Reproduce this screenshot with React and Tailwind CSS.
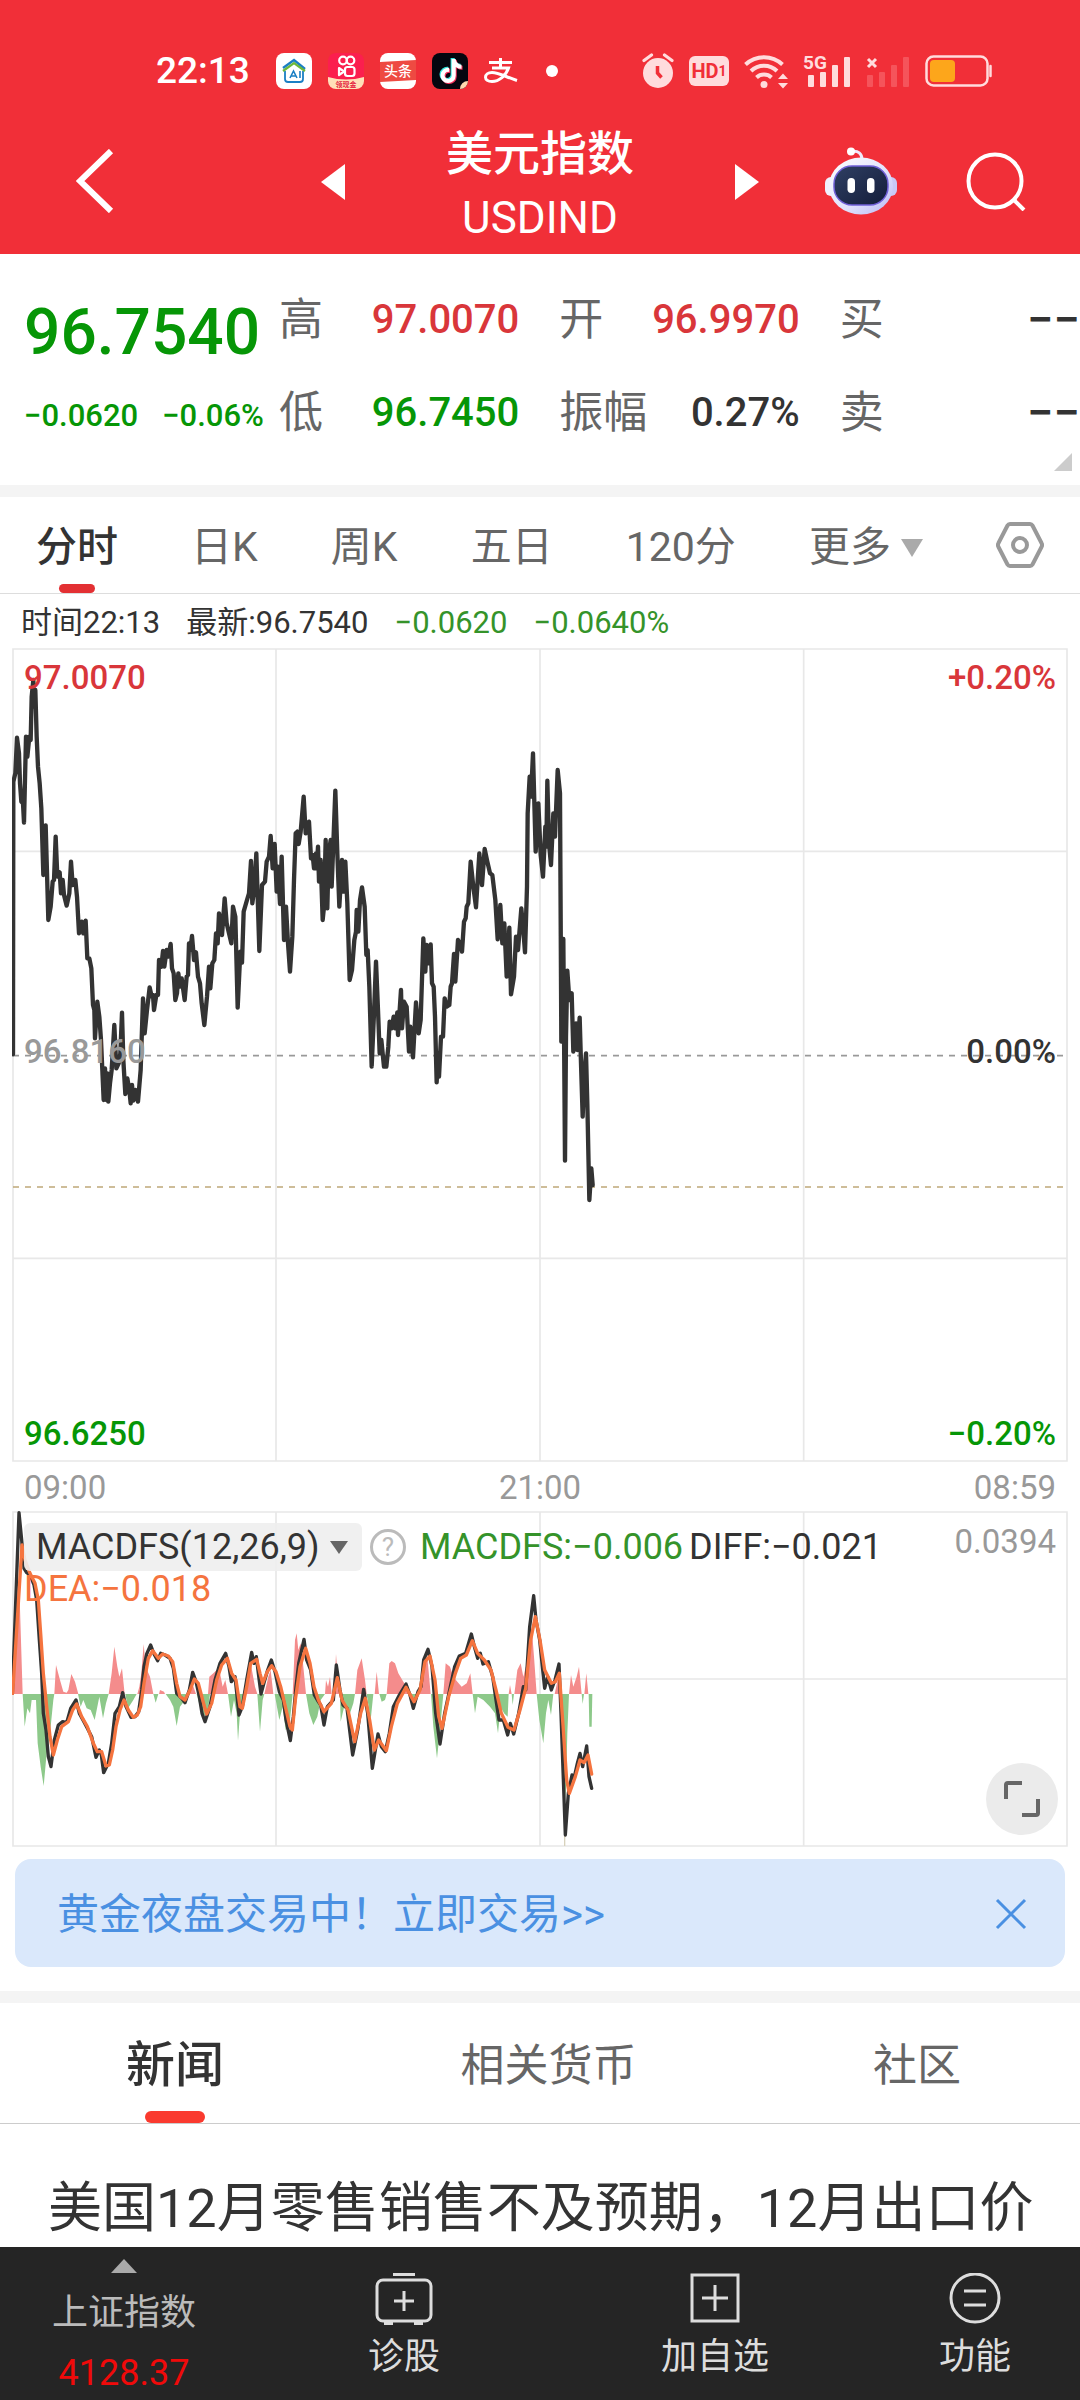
import { useState } from 'react';
import { FaTiktok } from 'react-icons/fa6';

const quotes = [
  { label: '高', value: '97.0070', color: 'text-[40px] text-[#d9363a]' },
  { label: '开', value: '96.9970', color: 'text-[40px] text-[#d9363a]' },
  { label: '买', value: '−−', color: 'text-[47px] text-[#333333]' },
  { label: '低', value: '96.7450', color: 'text-[40px] text-[#069606]' },
  { label: '振幅', value: '0.27%', color: 'text-[40px] text-[#333333]' },
  { label: '卖', value: '−−', color: 'text-[47px] text-[#333333]' },
];

const periods = ['分时', '日K', '周K', '五日', '120分'];
const sections = ['新闻', '相关货币', '社区'];

// Chart points are in thirds of a pixel, one "x,y" pair per tick
const PRICE =
  '39,1243 40,425 46,400 51,293 57,340 60,430 64,485 69,490 72,548 78,290 82,350 88,290 92,300 95,170 100,120 102,200 106,150 110,290 114,380 119,430 124,505 130,705 137,556 145,840 152,800 158,725 162,720 167,590 172,710 179,697 183,760 188,720 192,765 200,797 208,760 213,665 218,735 226,720 231,770 237,880 245,845 250,880 257,842 262,955 268,955 274,985 279,1095 283,1110 285,1195 292,1085 298,1130 303,1200 311,1380 315,1285 319,1380 322,1300 325,1385 330,1330 335,1290 343,1155 349,1285 356,1270 361,1240 366,1118 370,1260 376,1362 382,1315 388,1350 392,1390 396,1335 400,1382 406,1350 414,1385 422,1290 429,1075 434,1180 441,1110 449,1042 455,1070 459,1065 462,1110 469,1065 474,1065 477,960 484,980 489,933 493,980 500,930 505,950 512,912 516,985 521,1000 526,1080 531,1060 535,1000 540,1040 545,1015 554,1080 560,1010 564,1005 567,910 571,930 576,888 582,960 588,937 594,1010 600,1030 605,1090 613,1155 621,1070 627,980 631,1045 637,970 643,960 648,880 653,910 657,820 666,885 674,775 680,850 687,880 694,910 699,800 706,830 713,1103 721,935 726,968 731,815 741,780 747,760 753,663 757,790 763,745 769,640 778,933 786,735 795,725 800,665 807,650 812,588 818,685 824,612 830,755 834,680 840,792 845,650 852,900 858,800 864,910 870,995 877,890 882,720 887,580 892,575 896,612 902,575 911,470 917,580 927,545 933,655 938,645 942,685 948,640 950,685 954,620 957,725 962,660 968,840 972,800 977,600 982,805 986,640 992,600 995,740 1000,610 1006,452 1012,640 1018,800 1026,660 1030,755 1036,665 1042,790 1049,1020 1056,990 1063,900 1068,875 1070,810 1075,875 1080,780 1086,742 1094,800 1099,945 1103,930 1108,1040 1115,1280 1122,1120 1128,965 1134,1110 1139,1240 1144,1200 1152,1280 1159,1280 1165,1220 1169,1145 1175,1165 1181,1130 1186,1165 1192,1117 1194,1185 1203,1050 1206,1165 1212,1085 1220,1100 1227,1235 1231,1160 1239,1252 1248,1087 1256,1180 1262,1140 1270,895 1276,995 1280,915 1287,970 1292,913 1296,1030 1301,1040 1305,1130 1310,1327 1314,1240 1317,1310 1323,1190 1329,1190 1334,1075 1340,1100 1348,1095 1352,1040 1356,1030 1362,942 1366,1025 1374,900 1380,910 1386,935 1392,845 1397,835 1400,800 1405,790 1412,665 1420,740 1428,802 1438,640 1446,735 1454,627 1462,665 1470,700 1477,705 1486,780 1493,898 1501,795 1507,910 1513,850 1520,1010 1528,863 1533,1063 1542,1010 1548,890 1554,930 1564,805 1570,870 1575,937 1581,740 1583,520 1589,410 1593,470 1599,340 1607,635 1615,490 1622,645 1629,710 1636,560 1639,620 1642,422 1647,610 1653,675 1660,520 1665,590 1673,390 1680,460 1684,1205 1690,897 1695,1562 1698,1190 1702,992 1708,1080 1715,1060 1720,1235 1728,1150 1732,1230 1739,1133 1743,1270 1748,1430 1753,1300 1758,1240 1762,1390 1768,1680 1774,1585 1778,1635';

const DIFF =
  '37,580 57,38 65,120 72,205 80,218 90,225 102,255 110,300 118,420 125,520 130,640 138,690 145,770 153,800 163,720 175,675 188,665 200,668 212,625 228,600 238,640 250,662 262,685 275,710 288,772 298,750 304,765 311,818 325,790 335,730 345,640 358,620 368,578 378,620 393,652 405,650 416,635 425,570 432,500 440,462 452,435 462,462 473,482 482,460 495,465 510,475 520,505 530,580 545,595 555,608 568,570 578,517 588,545 598,590 606,640 615,665 630,620 645,540 660,490 677,460 687,500 694,545 705,530 717,645 727,620 740,540 755,457 762,490 769,470 775,520 783,582 793,545 803,510 814,480 825,515 838,575 850,600 858,660 871,722 880,650 888,560 896,490 912,418 920,480 932,510 943,585 955,605 962,615 972,675 982,620 1000,600 1009,495 1020,570 1029,615 1041,625 1058,765 1073,690 1091,568 1103,640 1117,805 1134,702 1144,740 1156,755 1168,700 1180,620 1198,585 1218,552 1230,585 1240,625 1254,575 1263,560 1271,480 1284,448 1296,500 1307,640 1320,732 1334,640 1350,565 1364,500 1378,468 1397,460 1414,402 1423,440 1433,475 1441,460 1449,492 1465,485 1478,530 1488,600 1497,660 1510,660 1523,705 1531,670 1541,702 1556,640 1570,560 1577,570 1589,380 1601,287 1608,360 1619,420 1627,500 1634,565 1643,530 1654,570 1665,540 1677,492 1683,640 1696,1005 1705,880 1716,825 1722,835 1732,790 1740,760 1748,800 1760,738 1767,830 1775,865';

const DEA =
  '38,580 66,135 75,180 90,220 105,250 115,300 122,400 130,520 140,620 150,710 160,765 172,720 185,680 205,665 218,630 230,612 245,650 262,680 280,730 292,755 305,755 318,798 328,795 338,750 348,680 360,630 372,600 385,630 400,652 412,645 422,620 432,550 445,475 458,452 475,475 488,462 505,468 518,485 530,550 540,590 555,600 570,570 583,537 595,550 608,600 620,642 635,610 650,540 665,495 682,475 695,520 708,540 720,620 727,625 740,560 752,490 770,478 780,520 788,550 802,515 815,497 828,515 842,560 856,620 870,680 877,690 886,600 900,500 917,445 930,490 942,560 955,600 972,635 994,610 1012,533 1026,600 1044,630 1064,725 1082,640 1096,595 1109,660 1123,750 1136,720 1159,752 1174,680 1192,610 1218,562 1242,605 1260,570 1275,485 1290,468 1305,540 1316,650 1326,685 1346,590 1366,520 1382,475 1399,465 1417,422 1433,460 1453,480 1473,510 1488,570 1504,640 1524,682 1542,690 1560,630 1577,565 1592,420 1606,350 1620,420 1634,510 1654,550 1666,545 1678,520 1690,690 1700,840 1708,880 1726,830 1740,780 1752,788 1764,765 1775,822';

const UP_BARS =
  '37,582 45,400 57,230 68,582 163,582 168,495 180,540 190,575 200,578 205,570 214,522 225,545 235,582 326,582 335,520 343,440 352,500 358,530 366,505 374,582 412,582 418,560 424,520 431,432 437,500 450,530 460,582 477,582 480,570 492,575 495,582 560,582 575,545 588,582 624,582 628,530 640,520 650,510 660,520 668,560 676,540 684,582 732,582 740,540 752,490 765,560 772,582 793,582 805,530 812,510 820,582 878,582 885,420 890,400 895,450 902,430 908,480 918,582 975,582 978,540 984,560 990,530 995,582 1002,582 1008,462 1014,540 1020,582 1065,582 1072,510 1085,475 1095,540 1100,582 1124,582 1130,515 1137,582 1160,582 1168,490 1175,483 1185,490 1195,520 1210,545 1225,570 1235,582 1255,582 1270,480 1282,470 1292,582 1330,582 1337,490 1350,500 1360,530 1372,545 1385,560 1400,550 1411,520 1418,582 1526,582 1530,555 1535,582 1543,582 1552,510 1562,490 1570,530 1585,470 1595,380 1602,470 1610,582 1664,582 1675,530 1682,582 1707,582 1713,525 1720,560 1730,530 1737,500 1745,582 1753,582 1759,520 1765,582';

const DOWN_BARS =
  '68,582 74,680 82,625 90,640 95,600 108,600 113,730 122,800 131,858 140,760 150,700 160,600 163,582 234,582 242,620 250,600 260,625 272,630 284,660 292,620 298,590 309,655 318,610 326,582 376,582 384,625 400,600 410,582 460,582 467,608 475,582 497,582 510,600 520,620 530,678 540,620 555,600 562,582 590,582 600,620 612,650 625,620 630,582 684,582 693,650 702,600 710,640 714,722 720,640 730,582 772,582 780,695 788,600 793,582 824,582 838,660 848,620 857,690 868,680 878,582 918,582 928,640 940,675 952,650 962,600 975,582 1020,582 1022,665 1035,610 1050,640 1060,610 1065,582 1100,582 1112,660 1120,582 1138,582 1145,605 1155,600 1160,582 1235,582 1243,625 1252,582 1293,582 1300,680 1311,775 1320,690 1330,582 1418,582 1425,640 1433,590 1450,600 1470,620 1485,640 1494,700 1502,620 1512,640 1523,650 1526,582 1535,582 1538,615 1542,582 1610,582 1618,660 1630,730 1638,640 1645,600 1653,645 1660,582 1684,582 1690,800 1697,900 1702,700 1707,582 1745,582 1748,612 1752,582 1766,582 1768,680 1775,680 1777,582';

const HomeAppIcon = () => (
  <svg viewBox="0 0 36 36" className="h-9 w-9">
    <rect width="36" height="36" rx="8" fill="#fff" />
    <path d="M9 18v8a3 3 0 0 0 3 3h12a3 3 0 0 0 3-3v-8" fill="none" stroke="#1b7fc4" strokeWidth="1.8" />
    <path d="M7 15 18 7l11 9" fill="none" stroke="#1b7fc4" strokeWidth="2.4" />
    <path d="m7 18 11-8 11 8" fill="none" stroke="#6cb83a" strokeWidth="2.2" />
    <path d="m14 25 3.5-7 3.5 7m-5.500-2h4M24 18v7" fill="none" stroke="#1b7fc4" strokeWidth="1.6" />
  </svg>
);

const CameraAppIcon = () => (
  <svg viewBox="0 0 36 36" className="h-9 w-9">
    <defs>
      <clipPath id="cameraClip"><rect width="36" height="36" rx="8" /></clipPath>
    </defs>
    <g clipPath="url(#cameraClip)">
      <rect width="36" height="36" fill="#fb1f4e" />
      <path d="M0 24q18 5 36 0v12H0z" fill="#ffe0b8" />
      <g fill="none" stroke="#fff" strokeWidth="2.2">
        <circle cx="15" cy="7.500" r="3.800" />
        <circle cx="22.500" cy="7.500" r="3.800" />
        <rect x="17" y="14" width="9.500" height="9" rx="2.500" />
        <path d="m11 15 5 3.500-5 3.500z" strokeLinejoin="round" />
      </g>
      <text x="18" y="34" textAnchor="middle" fontSize="7" fontWeight="700" fill="#e5243f">领现金</text>
    </g>
  </svg>
);

const HeadlineAppIcon = () => (
  <svg viewBox="0 0 36 36" className="h-9 w-9">
    <rect width="36" height="36" rx="8" fill="#fff" />
    <path d="M0 9 36 7v20L0 29z" fill="#ee4a42" />
    <text x="18" y="23" textAnchor="middle" fontSize="14" fontWeight="500" fill="#fff">头条</text>
  </svg>
);

const MusicAppIcon = () => (
  <svg viewBox="0 0 36 36" className="h-9 w-9">
    <rect width="36" height="36" rx="8" fill="#05060f" />
    <FaTiktok x="6" y="5" size={24} color="#35e4dc" />
    <FaTiktok x="8" y="7" size={24} color="#f5325c" />
    <FaTiktok x="7" y="6" size={24} color="#ffffff" />
    <path d="M28 36a8 8 0 0 1 8-8 8 8 0 0 1-8 8z" fill="#ffd9b0" />
  </svg>
);

const PayIcon = () => (
  <svg viewBox="0 0 34 26" className="h-[26px] w-[34px]" fill="none" stroke="#fff" strokeWidth="3">
    <path d="M5 4.500h23M16.500 0v10M8 10h16.500c-2.500 7.500-9.500 13.500-16.500 13.500-4 0-6.500-1.800-6.500-4.300S4 14.500 8 14.500c6.500 0 14 4.500 25 8" />
  </svg>
);

const AlarmIcon = () => (
  <svg viewBox="0 0 32 36" className="h-9 w-8">
    <circle cx="16" cy="20" r="15" fill="#ffdcdd" />
    <path d="M2 7.500 9.500 2M30 7.500 22.500 2" stroke="#ffdcdd" strokeWidth="3.200" strokeLinecap="round" />
    <path d="M15.500 13v7l4 4.500" fill="none" stroke="#f12f38" strokeWidth="3.500" />
  </svg>
);

const WifiIcon = () => (
  <svg viewBox="0 0 44 36" className="h-9 w-11">
    <g fill="none" stroke="#ffdcdd" strokeWidth="4">
      <path d="M1.500 11.500a27 27 0 0 1 37 0" />
      <path d="M7 18a18.500 18.500 0 0 1 26 0" />
      <path d="M12.500 24.500a11 11 0 0 1 15 0" />
    </g>
    <circle cx="20" cy="31.500" r="3.500" fill="#ffdcdd" />
    <path d="M34 26 39 20.500l5 5.500zM34 30h10l-5 5.500z" fill="#ffdcdd" />
  </svg>
);

const MobileSignalIcon = () => (
  <svg viewBox="0 0 48 36" className="h-9 w-12 overflow-visible" fill="#ffdcdd">
    <rect x="5" y="22" width="6" height="12" rx="1" />
    <rect x="17" y="19" width="6" height="15" rx="1" />
    <rect x="29" y="12" width="6" height="22" rx="1" />
    <rect x="41" y="4" width="6" height="30" rx="1" />
    <text x="0" y="16" fontSize="19" fontWeight="700">5G</text>
  </svg>
);

const NoSignalIcon = () => (
  <svg viewBox="0 0 44 36" className="h-9 w-11">
    <path d="m2 6 8 8m0-8-8 8" stroke="#ffdcdd" strokeWidth="3" />
    <g fill="#f5545b">
      <rect x="1" y="22" width="6" height="12" rx="1" />
      <rect x="13" y="19" width="6" height="15" rx="1" />
      <rect x="25" y="12" width="6" height="22" rx="1" />
      <rect x="37" y="4" width="6" height="30" rx="1" />
    </g>
  </svg>
);

const BatteryIcon = () => (
  <svg viewBox="0 0 68 34" className="h-[34px] w-[68px]">
    <rect x="1.500" y="2.500" width="61" height="29" rx="7" fill="none" stroke="#ffdcdd" strokeWidth="2.500" />
    <rect x="5" y="6" width="25" height="22" rx="4" fill="#fda61b" />
    <path d="M65.500 12v10" stroke="#ffdcdd" strokeWidth="2.500" strokeLinecap="round" />
  </svg>
);

const RobotIcon = () => (
  <svg viewBox="0 0 72 68" className="h-[68px] w-[72px]">
    <defs>
      <linearGradient id="shell" x1="0" y1="0" x2="1" y2="1">
        <stop offset="0" stopColor="#ffffff" />
        <stop offset="0.600" stopColor="#dfe0fb" />
        <stop offset="1" stopColor="#b9b8f4" />
      </linearGradient>
      <linearGradient id="visor" x1="0" y1="0" x2="1" y2="1">
        <stop offset="0" stopColor="#2f3f63" />
        <stop offset="1" stopColor="#141d3a" />
      </linearGradient>
    </defs>
    <path d="M27 4.500c6-1 10 2 10 8" fill="none" stroke="#efe9fb" strokeWidth="3" />
    <circle cx="26" cy="4.500" r="4" fill="#fff" />
    <rect x="0" y="30" width="14" height="19" rx="6" fill="#f0f0fd" />
    <rect x="58" y="30" width="14" height="19" rx="6" fill="#c9c9f6" />
    <ellipse cx="36" cy="39" rx="32" ry="28.500" fill="url(#shell)" />
    <rect x="9" y="19" width="54" height="39" rx="18" fill="url(#visor)" stroke="#6f5fd6" strokeWidth="1.500" />
    <rect x="22.500" y="31" width="7.500" height="15" rx="3.700" fill="#fff" />
    <rect x="42" y="31" width="7.500" height="15" rx="3.700" fill="#fff" />
  </svg>
);

const StatusBar = () => (
  <div className="flex h-[42px] items-center justify-between pl-[156px] pr-[87px]">
    <div className="flex items-center gap-4">
      <span className="mr-2.5 text-[37px] leading-[42px] font-medium">22:13</span>
      <HomeAppIcon />
      <CameraAppIcon />
      <HeadlineAppIcon />
      <MusicAppIcon />
      <PayIcon />
      <span className="ml-3 h-3 w-3 rounded-full bg-white" />
    </div>
    <div className="flex items-center gap-[15px]">
      <AlarmIcon />
      <span className="flex h-[30px] w-10 items-end justify-center rounded-md bg-[#ffdcdd] leading-[30px] font-bold text-[#f12f38]">
        <span className="text-[20px]">HD</span>
        <span className="text-[14px]">1</span>
      </span>
      <WifiIcon />
      <MobileSignalIcon />
      <NoSignalIcon />
      <BatteryIcon />
    </div>
  </div>
);

const Header = () => (
  <header className="bg-[#f12f38] pt-[50px] text-white">
    <StatusBar />
    <div className="grid grid-cols-[1fr_auto_1fr] items-center pt-[30px] pb-1">
      <div className="pb-2.5 pl-[76px]">
        <button aria-label="返回" className="block">
          <svg viewBox="0 0 38 64" className="h-16 w-[38px]">
            <path d="M35 2 4 32l31 30" fill="none" stroke="#fff" strokeWidth="6" />
          </svg>
        </button>
      </div>
      <div className="flex items-center gap-[101px]">
        <button aria-label="上一个" className="pb-2">
          <svg viewBox="0 0 24 36" className="h-9 w-6"><path d="M24 0v36L0 18z" fill="#fff" /></svg>
        </button>
        <div className="text-center">
          <h1 className="text-[47px] leading-[64px] font-medium">美元指数</h1>
          <p className="text-[44px] leading-[64px]">USDIND</p>
        </div>
        <button aria-label="下一个" className="pb-2">
          <svg viewBox="0 0 24 36" className="h-9 w-6"><path d="M0 0v36l24-18z" fill="#fff" /></svg>
        </button>
      </div>
      <div className="flex items-center justify-between pr-[54px] pb-2.5 pl-[66px]">
        <button aria-label="智能助手"><RobotIcon /></button>
        <button aria-label="搜索">
          <svg viewBox="0 0 60 60" className="h-[60px] w-[60px]" fill="none" stroke="#fff" strokeWidth="4">
            <circle cx="29" cy="30" r="26.500" />
            <path d="m47 48 11 11" />
          </svg>
        </button>
      </div>
    </div>
  </header>
);

const QuotePanel = () => (
  <section className="relative flex pt-9 pb-[42px] pl-6">
    <div className="w-[255px] shrink-0 text-[#069606]">
      <p className="text-[64px] leading-[86px] font-medium">96.7540</p>
      <p className="mt-5 flex gap-6 text-[31px] leading-10 font-medium">
        <span>−0.0620</span>
        <span>−0.06%</span>
      </p>
    </div>
    <dl className="grid flex-1 grid-cols-3 gap-x-10 gap-y-[33px]">
      {quotes.map((quote) => (
        <div key={quote.label} className="flex items-center justify-between leading-[60px]">
          <dt className="text-[44px] text-[#666666]">{quote.label}</dt>
          <dd className={`font-medium ${quote.color}`}>{quote.value}</dd>
        </div>
      ))}
    </dl>
    <svg viewBox="0 0 18 18" className="absolute right-2 bottom-3.5 h-[18px] w-[18px]">
      <path d="M18 0v18H0z" fill="#cccccc" />
    </svg>
  </section>
);

const PeriodTabs = () => {
  const [active, setActive] = useState('分时');

  return (
    <nav className="flex h-[97px] items-stretch justify-between border-b border-[#dddddd] px-9 text-[41px] text-[#666666]">
      {periods.map((period) => (
        <button
          key={period}
          onClick={() => setActive(period)}
          className={`relative pt-1.5 ${active === period ? 'font-medium text-[#333333]' : ''}`}
        >
          {period}
          {active === period && (
            <span className="absolute bottom-0 left-1/2 h-[9px] w-9 -translate-x-1/2 rounded-full bg-[#e33033]" />
          )}
        </button>
      ))}
      <button className="flex items-center gap-2.5 pt-1.5" aria-haspopup="menu">
        更多
        <svg viewBox="0 0 22 18" className="h-[18px] w-[22px]"><path d="M0 0h22L11 18z" fill="#aaaaaa" /></svg>
      </button>
      <button aria-label="图表设置">
        <svg viewBox="0 0 48 46" className="h-[46px] w-12" fill="none" stroke="#999999" strokeWidth="4">
          <path d="M14 2h20a3 3 0 0 1 2.500 1.500l9 17.500a4 4 0 0 1 0 4l-9 17.500A3 3 0 0 1 34 44H14a3 3 0 0 1-2.500-1.500L2.500 25a4 4 0 0 1 0-4l9-17.500A3 3 0 0 1 14 2z" />
          <circle cx="24" cy="23" r="7" />
        </svg>
      </button>
    </nav>
  );
};

const PriceChart = () => (
  <div className="relative mx-3 text-[33px] leading-10 font-medium">
    <svg viewBox="36 24 3168 2442" className="block w-full" fill="none">
      <g stroke="#e8e8e8" strokeWidth="5">
        <path d="M39 27H3201V2463H39z" />
        <path d="M828 27V2463M1620 27V2463M2411 27V2463M39 634H3201M39 1855H3201" />
      </g>
      <path d="M39 1247H3201" stroke="#999999" strokeWidth="5" strokeDasharray="18 18" />
      <path d="M39 1641H3201" stroke="#bfa878" strokeWidth="5" strokeDasharray="18 18" />
      <polyline points={PRICE} stroke="#333333" strokeWidth="13" strokeLinejoin="round" strokeLinecap="round" />
    </svg>
    <span className="absolute top-2.5 left-3 text-[#d9363a]">97.0070</span>
    <span className="absolute top-2.5 right-3 text-[#d9363a]">+0.20%</span>
    <span className="absolute top-1/2 left-3 -translate-y-1/2 pb-1.5 text-[#999999]">96.8160</span>
    <span className="absolute top-1/2 right-3 -translate-y-1/2 pb-1.5 text-[#333333]">0.00%</span>
    <span className="absolute bottom-2 left-3 text-[#069606]">96.6250</span>
    <span className="absolute right-3 bottom-2 text-[#069606]">−0.20%</span>
  </div>
);

const MacdChart = () => (
  <div className="relative mx-3">
    <svg viewBox="36 33 3168 1008" className="block w-full" fill="none">
      <g stroke="#e8e8e8" strokeWidth="5">
        <path d="M39 36H3201V1038H39z" />
        <path d="M828 36V1038M1620 36V1038M2411 36V1038M39 537H3201" />
      </g>
      <polygon points={UP_BARS} fill="#f48c8c" />
      <polygon points={DOWN_BARS} fill="#8dc98a" />
      <path d="M1694 1005V1038" stroke="#d8d2bc" strokeWidth="4" />
      <g strokeWidth="10" strokeLinejoin="round" strokeLinecap="round">
        <polyline points={DIFF} stroke="#333333" />
        <polyline points={DEA} stroke="#f5743f" />
      </g>
    </svg>
    <div className="absolute top-3 right-3 left-3 text-[36px]">
      <div className="flex h-12 items-center">
        <label className="flex h-12 items-center gap-2.5 rounded-md bg-[#eeeeee]/90 pr-3.5 pl-3 text-[#333333]">
          <select aria-label="指标" className="appearance-none bg-transparent leading-[48px] outline-none">
            <option>MACDFS(12,26,9)</option>
          </select>
          <svg viewBox="0 0 18 13" className="h-[13px] w-[18px]"><path d="M0 0h18L9 13z" fill="#666666" /></svg>
        </label>
        <button aria-label="指标说明" className="ml-2 h-9 w-9 rounded-full border-[3px] border-[#bbbbbb] text-[26px] leading-[30px] text-[#bbbbbb]">
          ?
        </button>
        <span className="ml-3.5 text-[#35932a]">MACDFS:−0.006</span>
        <span className="ml-1.5 text-[#333333]">DIFF:−0.021</span>
        <span className="mb-2.5 ml-auto text-[33px] text-[#999999]">0.0394</span>
      </div>
      <p className="-mt-0.5 leading-[40px] text-[#f5743f]">DEA:−0.018</p>
    </div>
    <button aria-label="全屏" className="absolute right-2.5 bottom-3 flex h-[72px] w-[72px] items-center justify-center rounded-full bg-[#ebebeb]">
      <svg viewBox="0 0 38 38" className="h-[38px] w-[38px]" fill="none" stroke="#666666" strokeWidth="4">
        <path d="M3 19V5a2 2 0 0 1 2-2h14M35 19v14a2 2 0 0 1-2 2H19" />
      </svg>
    </button>
  </div>
);

const Banner = () => {
  const [open, setOpen] = useState(true);

  if (!open) return null;

  return (
    <div className="mx-[15px] mt-3 mb-6 flex h-[108px] items-center justify-between rounded-2xl bg-[#dae8fb] pt-0.5 pr-[38px] pl-[42px]">
      <a href="#trade" className="text-[42px] text-[#4a90e2]">黄金夜盘交易中！立即交易&gt;&gt;</a>
      <button aria-label="关闭" onClick={() => setOpen(false)}>
        <svg viewBox="0 0 32 32" className="h-8 w-8"><path d="m2 2 28 28M30 2 2 30" stroke="#4a90e2" strokeWidth="3" /></svg>
      </button>
    </div>
  );
};

const SectionTabs = () => {
  const [active, setActive] = useState('新闻');

  return (
    <nav className="flex h-[121px] items-stretch justify-between border-b border-[#cccccc] pr-[119px] pl-[126px]">
      {sections.map((section) => (
        <button
          key={section}
          onClick={() => setActive(section)}
          className={`relative pt-1.5 ${active === section ? 'text-[49px] font-medium text-[#333333]' : 'text-[44px] text-[#666666]'}`}
        >
          {section}
          {active === section && (
            <span className="absolute bottom-0 left-1/2 h-3 w-[60px] -translate-x-1/2 rounded-full bg-[#fa3a2f]" />
          )}
        </button>
      ))}
    </nav>
  );
};

const BottomBar = () => (
  <footer className="sticky bottom-0 grid grid-cols-[248fr_312fr_310fr_210fr] bg-[#252525] text-[36px] leading-[44px] text-[#dddddd]">
    <button className="flex flex-col items-center pt-3 pb-[5px] text-[#bbbbbb]">
      <svg viewBox="0 0 26 14" className="h-3.5 w-[26px]"><path d="M13 0l13 14H0z" fill="#aaaaaa" /></svg>
      <span className="mt-[18px]">上证指数</span>
      <span className="mt-4 text-[#f00a0a]">4128.37</span>
    </button>
    <button className="flex flex-col items-center pt-[26px]">
      <svg viewBox="0 0 58 52" className="h-[52px] w-[58px]" fill="none" stroke="#dddddd" strokeWidth="3">
        <rect x="2" y="7" width="54" height="41" rx="6" />
        <path d="M18 1.500h22M29 18v20M19 28h20M9 50.500h9M39 50.500h9" />
      </svg>
      <span className="mt-2.5">诊股</span>
    </button>
    <button className="flex flex-col items-center pt-[26px]">
      <svg viewBox="0 0 52 52" className="h-[52px] w-[52px]" fill="none" stroke="#dddddd" strokeWidth="3">
        <path d="M3 2h46v46H3zM26 12v26M13 25h26" />
      </svg>
      <span className="mt-2.5">加自选</span>
    </button>
    <button className="flex flex-col items-center pt-[26px]">
      <svg viewBox="0 0 52 52" className="h-[52px] w-[52px]" fill="none" stroke="#dddddd" strokeWidth="3">
        <circle cx="26" cy="25" r="24" />
        <path d="M15 18h22M15 32h22" />
      </svg>
      <span className="mt-2.5">功能</span>
    </button>
  </footer>
);

const App = () => {
  return (
    <div className="flex min-h-screen flex-col bg-white font-['Roboto','Noto_Sans_CJK_SC',sans-serif]" lang="zh-CN">
      <Header />
      <QuotePanel />
      <div className="h-3 bg-[#f4f4f4]" />
      <PeriodTabs />
      <div className="flex h-[54px] items-center gap-[26px] px-[21px] pt-1 text-[31px] text-[#333333]">
        <span>时间22:13</span>
        <span>最新:96.7540</span>
        <span className="text-[#35932a]">−0.0620</span>
        <span className="text-[#35932a]">−0.0640%</span>
      </div>
      <PriceChart />
      <div className="mx-6 flex h-[49px] items-center justify-between pt-0.5 text-[33px] text-[#999999]">
        <span>09:00</span>
        <span>21:00</span>
        <span>08:59</span>
      </div>
      <MacdChart />
      <Banner />
      <div className="h-3 bg-[#f4f4f4]" />
      <SectionTabs />
      <main className="flex-1 overflow-hidden px-12 pt-[52px] pb-[5px]">
        <a href="#news" className="block text-[54px] leading-[66px] whitespace-nowrap text-[#333333]">
          美国12月零售销售不及预期，12月出口价
        </a>
      </main>
      <BottomBar />
    </div>
  );
};

export default App;
